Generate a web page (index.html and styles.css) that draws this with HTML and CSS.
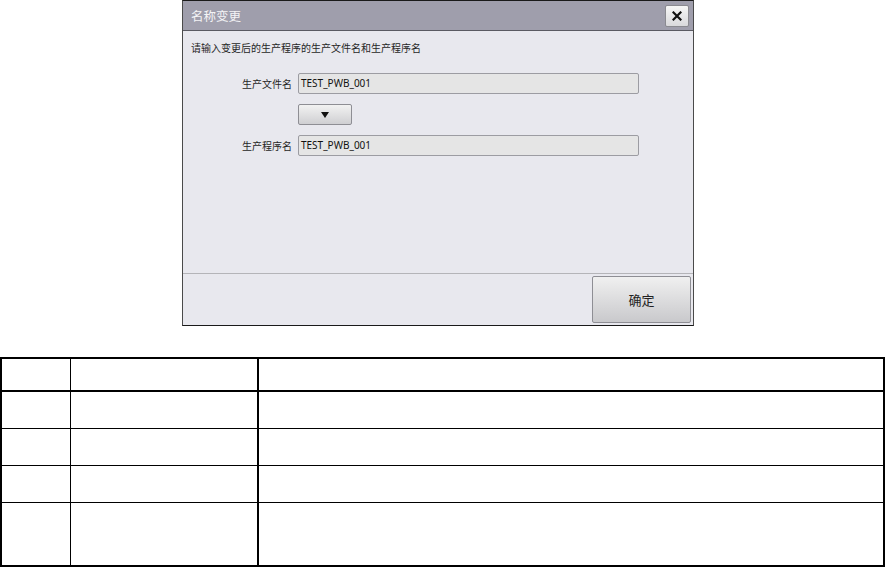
FILE: index.html
```html
<!DOCTYPE html>
<html lang="zh">
<head>
<meta charset="utf-8">
<title>名称变更</title>
<link rel="stylesheet" href="styles.css">
</head>
<body>
<div class="dialog">
  <div class="titlebar">
    <span class="title">名称变更</span>
    <button class="close" type="button" aria-label="关闭">
      <svg width="10" height="10" viewBox="0 0 10 10"><path d="M1.5 1.5 L8.5 8.5 M8.5 1.5 L1.5 8.5" stroke="#111" stroke-width="2.2" stroke-linecap="square"/></svg>
    </button>
  </div>
  <div class="body">
    <p class="hint">请输入变更后的生产程序的生产文件名和生产程序名</p>
    <div class="form">
      <div class="row">
        <span class="label">生产文件名</span>
        <div class="field">TEST_PWB_001</div>
      </div>
      <div class="row">
        <span class="label"></span>
        <button class="down" type="button" aria-label="复制">
          <svg width="8" height="6" viewBox="0 0 8 6"><polygon points="0,0 8,0 4,6" fill="#111"/></svg>
        </button>
      </div>
      <div class="row">
        <span class="label">生产程序名</span>
        <div class="field">TEST_PWB_001</div>
      </div>
    </div>
  </div>
  <div class="footer">
    <button class="ok" type="button">确定</button>
  </div>
</div>

<table class="grid">
  <tr class="head"><td class="c1"></td><td class="c2"></td><td class="c3"></td></tr>
  <tr class="r"><td class="c1"></td><td class="c2"></td><td class="c3"></td></tr>
  <tr class="r"><td class="c1"></td><td class="c2"></td><td class="c3"></td></tr>
  <tr class="r"><td class="c1"></td><td class="c2"></td><td class="c3"></td></tr>
  <tr class="last"><td class="c1"></td><td class="c2"></td><td class="c3"></td></tr>
</table>
</body>
</html>
```
FILE: styles.css
```css
html, body {
  margin: 0;
  padding: 0;
  background: #ffffff;
}
body {
  font-family: "Noto Sans", "Noto Sans CJK SC", sans-serif;
  width: 885px;
}
.dialog {
  box-sizing: border-box;
  margin-left: 182px;
  width: 512px;
  height: 326px;
  border: 1px solid #4a4a4a;
  border-top-color: #1a1a1a;
  border-bottom-color: #1a1a1a;
  background: #e8e8ee;
  display: flex;
  flex-direction: column;
}
.titlebar {
  height: 29px;
  border-bottom: 1px solid #5a5a62;
  background: #9f9eac;
  display: flex;
  align-items: center;
  justify-content: space-between;
  padding: 0 4px 0 8px;
}
.title {
  color: #f4f4f6;
  font-size: 12.5px;
  font-family: "Noto Sans CJK SC", sans-serif;
  letter-spacing: 0;
}
.close {
  box-sizing: border-box;
  width: 24px;
  height: 22px;
  padding: 0;
  margin-top: 1px;
  border: 1px solid #8a8a90;
  border-radius: 2px;
  background: linear-gradient(#f6f6f6, #d9d9dc);
  display: flex;
  align-items: center;
  justify-content: center;
}
.body {
  flex: 1;
  padding: 10px 0 0 8px;
}
.hint {
  margin: 0;
  font-size: 10px;
  line-height: 14px;
  color: #262626;
  font-family: "Noto Sans CJK SC", sans-serif;
}
.form {
  margin-top: 18px;
  display: flex;
  flex-direction: column;
  gap: 10px;
}
.row {
  display: flex;
  align-items: center;
  gap: 6px;
}
.label {
  width: 101px;
  text-align: right;
  font-size: 10px;
  color: #262626;
  font-family: "Noto Sans CJK SC", sans-serif;
}
.field {
  box-sizing: border-box;
  width: 341px;
  height: 21px;
  border: 1px solid #9c9ca2;
  border-radius: 2px;
  background: #e5e5e5;
  font-size: 10px;
  line-height: 19px;
  padding-left: 2px;
  color: #111;
}
.down {
  box-sizing: border-box;
  width: 54px;
  height: 21px;
  padding: 0;
  border: 1px solid #8e8e94;
  border-radius: 2px;
  background: linear-gradient(#f2f2f2, #cfcfd2);
  display: flex;
  align-items: center;
  justify-content: center;
}
.footer {
  box-sizing: border-box;
  height: 52px;
  flex: none;
  border-top: 1px solid #b4b4b8;
  display: flex;
  justify-content: flex-end;
  align-items: flex-start;
  padding: 2px 2px 0 0;
}
.ok {
  box-sizing: border-box;
  width: 99px;
  height: 47px;
  border: 1px solid #8e8e94;
  border-radius: 2px;
  background: linear-gradient(#f0f0f0, #c9c9cc);
  font-family: "Noto Sans CJK SC", sans-serif;
  font-size: 13px;
  color: #222;
  padding: 0;
}
.grid {
  margin-top: 31px;
  width: 885px;
  border-collapse: separate;
  border-spacing: 0;
  table-layout: fixed;
  border-top: 2px solid #000;
  border-left: 2px solid #000;
}
.grid td {
  padding: 0;
  border-bottom: 1px solid #000;
  border-right: 1px solid #000;
}
.grid td.c1 { width: 68px; }
.grid td.c2 { width: 186px; border-right-width: 2px; }
.grid td.c3 { border-right-width: 2px; }
.grid tr.head td { height: 31px; border-bottom-width: 2px; }
.grid tr.r td { height: 36px; }
.grid tr.last td { height: 62px; border-bottom-width: 2px; }
```
